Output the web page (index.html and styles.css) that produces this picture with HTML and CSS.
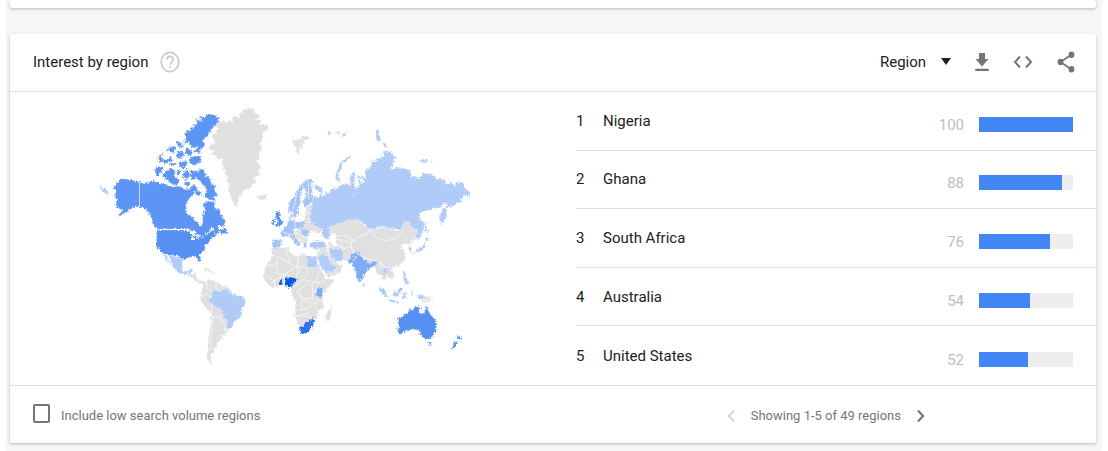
FILE: index.html
```html
<!DOCTYPE html>
<html lang="en">
<head>
<meta charset="utf-8">
<title>Interest by region</title>
<link rel="stylesheet" href="styles.css">
</head>
<body>
<main class="page">
<div class="card previous"></div>
<section class="card">
<header class="card-header">
<h1 class="title">Interest by region</h1>
<button class="icon-button help" type="button" aria-label="Help"><svg width="20" height="22" viewBox="0 0 20 22" preserveAspectRatio="none"><ellipse cx="10" cy="11" rx="8.8" ry="9.6" fill="none" stroke="currentColor" stroke-width="1.7"/><path d="M6.8 8.6C6.8 4.2 13.2 4.2 13.2 8.5C13.2 11 10 11.2 10 13.8M10 15.2V17" fill="none" stroke="currentColor" stroke-width="1.7"/></svg></button>
<div class="actions">
<div class="picker"><select class="resolution" aria-label="Resolution"><option>Region</option></select><svg class="caret" width="10" height="7" viewBox="0 0 10 7"><path d="M0 0H10L5 7Z" fill="currentColor"/></svg></div>
<button class="icon-button" type="button" aria-label="Download"><svg width="14" height="20" viewBox="0 0 14 20"><path d="M4 1H10V7H13.5L7 14.5L.5 7H4ZM.3 16.8H13.7V19H.3Z" fill="currentColor"/></svg></button>
<button class="icon-button" type="button" aria-label="Embed"><svg width="20" height="14" viewBox="0 0 20 14"><path d="M7 1.5L2 7L7 12.5M13 1.5L18 7L13 12.5" fill="none" stroke="currentColor" stroke-width="2"/></svg></button>
<button class="icon-button" type="button" aria-label="Share"><svg width="18" height="22" viewBox="0 0 18 22"><path d="M14.5 3.5L3.5 11L14.5 18.5" fill="none" stroke="currentColor" stroke-width="1.8"/><g fill="currentColor"><ellipse cx="14.5" cy="3.8" rx="2.9" ry="3.2"/><ellipse cx="3.5" cy="11" rx="2.9" ry="3.2"/><ellipse cx="14.5" cy="18.2" rx="2.9" ry="3.2"/></g></svg></button>
</div>
</header>
<div class="content">
<div class="map-panel">
<svg class="map" viewBox="90 100 390 270" role="img" aria-label="World map of interest by region">
<filter id="coast" x="0" y="0" width="1" height="1"><feTurbulence type="turbulence" baseFrequency=".35" numOctaves="2" seed="4"/><feDisplacementMap in="SourceGraphic" scale="4" xChannelSelector="R" yChannelSelector="G"/><feOffset dx="-1" dy="-1"/></filter>
<g filter="url(#coast)">
<path d="M90 100H480V370H90Z" fill="#fff"/>
<g class="none">
<path d="M219 123L224 121L227 124L228 120L233 122L232 117L236 116L239 119L240 113L244 115L242 110L249 108.500L255 110L254 113L258 114L260 117L256 120L261 120L259 125L265 124L269 127L266 131L261 134L264 138L260 143L262 148L258 153L260 157L257 162L261 167L257 170L260 175L254 178L256 182L252 184L250 188L243 190L241 196L238 199L237 206L235 205L231 199L230 193L228 191L230 185L227 181L228 176L225 172L223 165L222 159L217 158L216 155L210 155L214 151L208 148L211 145L216 144L213 138L213 135L217 132L218 128L215 126Z"/>
<path d="M258 195L261 196L263 194L268 195L266 199L262 200L259 199Z"/>
<path d="M293 139L297 141L297 138L301 139L302 136L308 136L308 140L303 140L305 143L301 145L303 149L299 147L299 155L297 153L296 147L293 144Z"/>
<path d="M188 273L195 274L197 279L202 281L205 281L203 284L197 282L192 277L187 275ZM204 268L209 269L212 272L206 271ZM213 272L217 273L213 274Z"/>
<path d="M203 283L208 279L215 281L220 284L224 286L230 288L232 294L240 300L232 320L224 329L228 331L226 335L220 336L223 338L217 342L217 347L214 348L214 352L210 356L211 363L214 366L209 363L207 356L208 342L211 322L211 313L205 308L200 298L202 292Z"/>
<path d="M271 249L288 247L290 253L298 257L302 254L307 256L317 257L317 262L322 272L326 279L334 279L330 287L323 294L322 300L324 307L318 312L317 318L313 323L308 331L302 334L299 327L295 315L296 302L291 293L292 287L285 285L278 286L272 288L265 281L263 276L266 265L272 257Z"/>
<path d="M332 306L332 313L329 321L326 320L327 313Z"/>
<path d="M307 205L311 206L312 215L316 222L322 226L323 230L318 233L311 231L307 236L308 241L304 244L301 242L295 238L294 231L300 229L303 224L305 217Z"/>
<path d="M329 227L337 223L342 222L346 218L357 219L362 224L370 230L382 227L391 229L400 231L403 224L405 220L411 222L417 231L422 231L420 239L414 239L409 245L404 243L401 246L405 251L404 260L400 265L391 268L394 274L393 279L388 277L384 281L382 276L378 274L376 269L365 260L352 260L343 260L336 249L329 247L330 240L335 244L336 236L329 233Z"/>
<path d="M318 248L326 247L332 256L337 263L343 266L339 273L328 277L325 271L317 258Z"/>
<path d="M424 296L429 297L434 303L429 301L425 302Z"/>
</g>
<g class="low">
<path d="M99 177L101 178M100 185L103 188L106 189L109 194L105 193L101 190Z"/>
<path d="M165 254L168 260L172 265L171 265L166 260L163 255ZM168 255L173 256L178 257L183 261L182 267L184 271L188 272L190 269L194 268L191 273L188 275L179 273L173 267L171 260Z"/>
<path d="M211 292L218 289L219 292L228 288L230 293L238 295L245 298L246 302L242 309L241 317L235 321L232 327L228 330L225 327L228 322L223 317L222 311L213 304L208 303L208 299L212 297Z"/>
<path d="M312 203L313 197L319 197L321 192L316 190L313 184L321 187L323 192L321 196L325 195L326 192L329 193L333 187L335 187L334 190L345 183L351 186L350 178L353 171L355 173L354 183L357 190L356 195L353 197L354 190L359 187L358 175L361 177L361 184L364 182L360 173L366 179L365 170L371 166L372 161L377 162L376 158L384 157L384 152L390 151L393 155L396 157L393 165L390 170L399 167L410 170L412 177L420 178L423 173L433 175L436 179L443 179L446 184L452 183L455 186L456 182L463 182L464 187L470 193L470 198L465 194L461 199L463 202L457 203L450 208L448 206L446 211L447 216L442 225L439 220L439 215L447 204L444 203L440 208L434 209L421 212L419 218L424 222L424 230L418 239L415 239L418 231L411 227L409 222L404 221L403 230L390 228L381 226L370 230L361 222L358 220L350 219L343 222L330 227L329 232L332 240L327 239L321 235L323 229L315 227L310 222L310 214Z"/>
<path d="M336 180L335 175L338 168L342 161L350 155L351 157L344 163L341 169L338 177L342 183Z"/>
<path d="M328 133L332 132L331 134L328 135ZM335 132L340 131L338 134ZM342 134L347 132L345 135L340 136ZM375 132L378 129L379 136L382 140L380 143L376 138ZM384 142L387 147L383 147ZM420 160L427 159L428 162L421 163ZM430 161L434 162L431 163Z"/>
<path d="M426 221L427 229L429 231L426 233L425 226ZM426 237L430 239L426 241L424 239ZM426 242L425 248L421 251L416 252L414 254L414 251L419 249L423 245ZM410 246L412 249L411 252L409 249Z"/>
<path d="M328 247L334 249L342 249L343 261L336 261L331 257ZM317 257L322 254L329 258L331 264L337 266L335 270L325 273L321 267ZM310 243L317 241L326 243L326 247L315 249L309 246ZM307 256L317 257L316 260L318 267L307 267Z"/>
<path d="M381 269L385 268L388 273L383 275L383 280L381 275ZM403 271L405 271L405 277L408 280L409 284L405 285L403 278ZM385 267L389 269L391 274"/>
<path d="M378 287L382 288L387 294L390 298L387 298L381 292ZM388 299L399 301L398 303L388 301ZM393 293L398 291L401 286L401 292L397 297L393 296ZM403 293L408 292L405 295L407 299L403 298ZM411 290L413 295L411 295ZM417 294L424 296L424 302L418 298Z"/>
</g>
<g class="mid">
<path d="M288 209L288 203L293 198L297 190L302 183L308 179L313 180L311 184L313 194L312 203L305 207L303 203L307 193L304 188L300 195L301 202L298 208L298 214L295 218L292 211L290 213Z"/>
<path d="M291 213L293 214L292 220L289 219ZM281 231L287 225L288 220L295 221L304 221L305 227L298 229L293 229L294 234L289 235L285 238L280 235ZM273 239L283 240L281 246L275 249L272 246ZM289 236L294 234L296 239L301 244L298 247L294 241L290 238ZM301 228L309 231L309 237L304 237L301 233ZM304 243L307 242L306 249L303 246Z"/>
<path class="britain" d="M276 212L279 211L280 217L283 222L281 226L276 227L278 221L275 217ZM272 220L275 219L275 224L271 225Z"/>
</g>
<g class="canada">
<path d="M114 194L116 191L113 188L117 183L122 178L132 180L139 182L145 184L153 181L160 184L166 184L172 187L180 186L186 190L192 187L193 183L196 187L199 188L194 193L189 199L186 205L187 213L194 218L198 224L200 226L202 225L203 215L205 210L203 203L208 201L214 202L215 209L219 208L221 215L225 221L224 226L217 226L220 229L227 229L227 233L222 234L220 231L215 236L213 228L208 232L203 237L198 240L195 237L195 231L187 229L157 229L153 224L152 218L146 210L139 207L133 207L127 212L117 217L123 210L117 208L115 203L117 200Z"/>
<path class="states" d="M157 230H187L191 234L194 234L197 239L203 237L213 230L216 236L211 239L208 244L205 245L205 249L200 254L200 263L198 262L197 257L188 257L183 260L178 256L167 255L161 252L156 245Z"/>
<path d="M155 168L159 166L163 168L161 173L156 177ZM162 176L167 170L172 168L176 171L174 176L180 180L177 185L171 184L167 180ZM158 157L163 152L161 158L167 160L171 157L173 161L164 164L159 161ZM165 151L170 147L169 143L171 147L176 145L174 153ZM175 141L181 143L184 147L180 148ZM178 152L183 151L184 156L180 159L175 156ZM180 162L186 161L187 166L183 169L179 166ZM184 172L188 168L190 175L187 180L182 177ZM190 157L200 156L201 163L193 165L189 162ZM185 181L190 183L188 186L184 185ZM168 164L177 163L174 167ZM187 147L193 153L188 156L185 151ZM177 169L181 171L179 176L177 173Z"/>
<path d="M219 120L215 126L210 131L208 137L203 140L205 145L201 149L200 154L194 152L198 147L193 148L188 142L183 145L186 139L185 134L187 129L190 132L191 127L196 128L192 124L198 124L196 119L202 121L200 116L206 117L205 114L210 114L215 115L219 118Z"/>
<path d="M191 170L198 172L200 168L204 170L206 176L210 179L211 183L216 187L215 190L218 196L214 197L215 202L208 198L204 197L207 190L202 183L197 178L192 180L190 175ZM196 190L202 192L200 196L195 194Z"/>
</g>
<g class="india"><path d="M346 262L351 259L352 254L357 250L360 254L355 256L353 263L349 264Z"/><path d="M352 265L355 258L359 252L363 259L370 263L378 260L377 264L372 267L367 271L363 278L361 283L358 281L355 269ZM362 284L364 284L363 287ZM317 288L323 288L323 295L320 298L316 294ZM380 286L385 290L387 292L382 289ZM397 292L400 287L402 290Z"/></g>
<g class="high"><path d="M397 318L402 316L408 313L409 309L413 310L415 306L421 307L419 312L424 314L426 305L428 309L429 313L434 318L437 324L436 331L431 338L427 339L422 337L421 333L418 333L419 330L414 329L406 331L400 334L398 331L399 326ZM428 342L432 342L430 346ZM458 334L459 337L462 337L459 341L457 338ZM456 341L458 343L454 349L451 350L453 345Z"/></g>
<path class="ghana" d="M279 280H282V286H279Z"/>
<path class="south-africa" d="M299 327L304 326L304 322L308 322L311 318L314 319L315 322L309 331L303 334L301 333Z"/>
<path class="nigeria" d="M286 278L290 277L297 278L295 283L292 285L289 288L285 285Z"/>
<path class="water" d="M188 231L194 230L197 233L194 234L194 240L192 240L192 234ZM196 234L200 235L199 239L197 237ZM331 233L336 235L334 239L337 246L333 247L331 242L329 237ZM309 236L316 234L325 239L323 242L315 240L309 242Z"/>
</g>
<g class="borders">
<path d="M139.500 182V207M157 229.500H187M200 298L206 294L211 297M207 281L207 288L212 293M216 282V288L219 292M222 285V290M211 304L212 317L222 317M213 317L210 350M220 318L226 325L225 334"/>
<path d="M272 255L281 258L295 267L307 267M288 248L286 253L291 263M266 265L273 266L277 262M277 260V274L284 275L295 267M266 275L274 281L284 275L296 278L300 268M270 285L275 280V287M284 276V286M307 267V275L301 282L292 288M305 280L319 283L326 280M319 273L316 282M312 283L313 298L303 299L298 291L308 283M296 292L302 299L302 310H294M303 300L312 303L319 302M302 310L313 305M298 316H311V321M311 299L323 301M314 303L319 313M298 258L297 269M295 316L308 313M317 288L313 295"/>
<path d="M333 239L343 240L351 243L359 236L366 235L370 230L377 238L386 241L397 238L403 230M351 243L352 250L356 253M341 249L342 240M343 249L352 246M356 253L367 259L380 261L384 267L391 268M337 237L344 235L352 239L356 242M335 244L344 248M308 222L316 223M306 213L312 214M307 235L316 233M294 231L302 236L310 240M298 238L305 242M318 247L322 256M326 248L330 256M380 262L383 272L388 276"/>
<path d="M297 191L295 202L293 210M303 185L303 197M308 181L309 200M295 221V229M281 231L290 235"/>
</g>
</svg>
</div>
<ol class="regions">
<li class="region"><span class="rank">1</span><span class="name">Nigeria</span><span class="value">100</span><span class="track"><span class="bar" style="width:100%"></span></span></li>
<li class="region"><span class="rank">2</span><span class="name">Ghana</span><span class="value">88</span><span class="track"><span class="bar" style="width:88%"></span></span></li>
<li class="region"><span class="rank">3</span><span class="name">South Africa</span><span class="value">76</span><span class="track"><span class="bar" style="width:76%"></span></span></li>
<li class="region"><span class="rank">4</span><span class="name">Australia</span><span class="value">54</span><span class="track"><span class="bar" style="width:54%"></span></span></li>
<li class="region"><span class="rank">5</span><span class="name">United States</span><span class="value">52</span><span class="track"><span class="bar" style="width:52%"></span></span></li>
</ol>
</div>
<footer class="card-footer">
<label class="low-volume"><input class="checkbox" type="checkbox">Include low search volume regions</label>
<nav class="pager" aria-label="Pages">
<button class="icon-button" type="button" aria-label="Previous" disabled><svg width="8" height="14" viewBox="0 0 8 14"><path d="M7 1.500L2 7L7 12.500" fill="none" stroke="currentColor" stroke-width="1.800"/></svg></button>
<span>Showing 1-5 of 49 regions</span>
<button class="icon-button" type="button" aria-label="Next"><svg width="8" height="14" viewBox="0 0 8 14"><path d="M1 1.500L6 7L1 12.500" fill="none" stroke="currentColor" stroke-width="2.200"/></svg></button>
</nav>
</footer>
</section>
</main>
</body>
</html>
```

FILE: styles.css
```css
* { box-sizing: border-box; }
body { margin: 0; background: #fff; color: #212121; font: 15px/20px Roboto, sans-serif; }
.page { margin: 0 6px; padding: 0 6px 8px 4px; background: #f6f6f6; }
.card { background: #fff; border-radius: 2px; box-shadow: 0 1px 3px rgba(0, 0, 0, .26); }
.previous { height: 8px; margin-bottom: 26px; }
.card-header { display: flex; align-items: center; gap: 12px; height: 58px; padding: 0 21px 2px 23px; border-bottom: 1px solid #dedede; }
.title { margin: 0; font-size: 15px; font-weight: 400; }
.icon-button { display: flex; align-items: center; justify-content: center; padding: 0; border: 0; background: none; color: #757575; }
.icon-button:disabled { color: #ccc; }
.help { color: #c9c9c9; }
.actions { display: flex; align-items: center; gap: 24px; margin-left: auto; }
.picker { display: grid; align-items: center; width: 71px; }
.resolution { grid-area: 1 / 1; width: 100%; padding: 0; border: 0; background: none; color: inherit; font: inherit; appearance: none; }
.caret { grid-area: 1 / 1; justify-self: end; pointer-events: none; }
.content { display: flex; min-height: 293px; }
.map-panel { flex: 550 1 0; padding-top: 8px; text-align: center; }
.map { width: 390px; max-width: 100%; }
.none { fill: #e0e0e0; }
.low { fill: #b1cbf9; }
.mid { fill: #a4c4f8; }
.britain { fill: #5793f3; }
.canada { fill: #5b95f4; }
.states { fill: #5490f2; }
.india { fill: #7eabf6; }
.high { fill: #5490f2; }
.ghana { fill: #1d68e8; }
.south-africa { fill: #2d73ea; }
.nigeria { fill: #0658e6; }
.low, .mid, .canada, .india, .high { stroke: #fff; stroke-width: .3; }
.borders { fill: none; stroke: #fff; stroke-width: .8; stroke-opacity: .8; }
.water { fill: #fff; }
.regions { flex: 520 1 0; display: grid; grid-auto-rows: 1fr; margin: 0; padding: 0 0 0 16px; list-style: none; }
.region { display: flex; align-items: center; padding-right: 23px; border-bottom: 1px solid #dedede; }
.region:last-child { border-bottom: 0; }
.rank { width: 27px; }
.name { flex: 1; }
.value { padding: 8px 15px 0 0; color: #bdbdbd; }
.track { width: 94px; height: 15px; margin-top: 7px; background: #eee; }
.bar { display: block; height: 100%; background: #4285f4; }
.card-footer { display: flex; align-items: center; justify-content: space-between; height: 58px; padding: 2px 171px 0 23px; border-top: 1px solid #dedede; color: #757575; font-size: 13px; }
.low-volume { display: flex; align-items: center; gap: 11px; }
.checkbox { width: 17px; height: 19px; margin: 0 0 4px; border: 2px solid #757575; border-radius: 2px; appearance: none; }
.pager { display: flex; align-items: center; gap: 16px; }
```
